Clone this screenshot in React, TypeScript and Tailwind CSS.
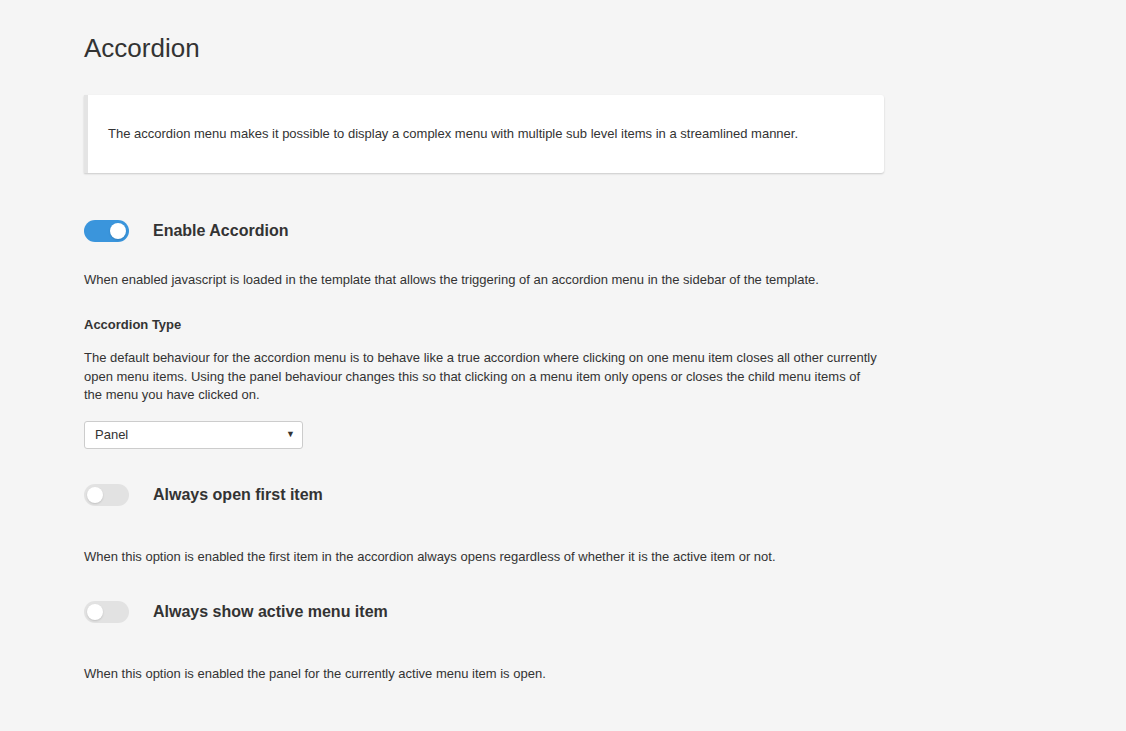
import { useState } from "react";

function Toggle({ on, onChange }: { on: boolean; onChange: () => void }) {
  return (
    <button
      type="button"
      onClick={onChange}
      className={`relative h-[22px] w-[45px] shrink-0 rounded-full transition-colors ${
        on ? "bg-[#3a95dc]" : "bg-[#e2e2e2]"
      }`}
    >
      <span
        className={`absolute top-[3px] h-4 w-4 rounded-full bg-white shadow-[0_1px_2px_rgba(0,0,0,0.15)] ${
          on ? "left-[26px]" : "left-[3px]"
        }`}
      />
    </button>
  );
}

function OptionRow({
  label,
  on,
  onChange,
}: {
  label: string;
  on: boolean;
  onChange: () => void;
}) {
  return (
    <div className="flex h-[22px] items-center gap-6">
      <Toggle on={on} onChange={onChange} />
      <span className="text-base leading-[22px] font-bold text-[#333]">{label}</span>
    </div>
  );
}

export default function App() {
  const [enabled, setEnabled] = useState(true);
  const [openFirst, setOpenFirst] = useState(false);
  const [showActive, setShowActive] = useState(false);

  return (
    <div
      className="min-h-[731px] bg-[#f5f5f5] pl-[84px] pt-[33px] text-[13px] text-[#333]"
      style={{ fontFamily: '"Liberation Sans", Arial, sans-serif' }}
    >
      <div className="w-[800px]">
        <h1 className="text-[26px] leading-[30px] font-normal text-[#333]">Accordion</h1>

        {/* intro card */}
        <div className="mt-8 rounded-r-[3px] border-l-4 border-[#e4e4e4] bg-white px-5 py-[30px] leading-[18px] shadow-[0_1px_2px_rgba(0,0,0,0.18)]">
          The accordion menu makes it possible to display a complex menu with multiple sub level items in a streamlined manner.
        </div>

        <div className="mt-[47px]">
          <OptionRow label="Enable Accordion" on={enabled} onChange={() => setEnabled(!enabled)} />
        </div>
        <p className="mt-[29px] leading-[18px]">
          When enabled javascript is loaded in the template that allows the triggering of an accordion menu in the sidebar of the template.
        </p>

        <h3 className="mt-[27px] font-bold leading-[18px]">Accordion Type</h3>
        <p className="mt-[15px] max-w-[796px] leading-[18.5px]">
          The default behaviour for the accordion menu is to behave like a true accordion where clicking on one menu item closes all other currently open menu items. Using the panel behaviour changes this so that clicking on a menu item only opens or closes the child menu items of the menu you have clicked on.
        </p>

        <div className="mt-4 flex h-[28px] w-[219px] items-center justify-between rounded-[3px] border border-[#cccccc] bg-white pl-[10px] pr-[7px]">
          <span>Panel</span>
          <span className="text-[9px] text-[#333]">▼</span>
        </div>

        <div className="mt-[35px]">
          <OptionRow label="Always open first item" on={openFirst} onChange={() => setOpenFirst(!openFirst)} />
        </div>
        <p className="mt-[42px] leading-[18px]">
          When this option is enabled the first item in the accordion always opens regardless of whether it is the active item or not.
        </p>

        <div className="mt-[35px]">
          <OptionRow label="Always show active menu item" on={showActive} onChange={() => setShowActive(!showActive)} />
        </div>
        <p className="mt-[42px] leading-[18px]">
          When this option is enabled the panel for the currently active menu item is open.
        </p>
      </div>
    </div>
  );
}
